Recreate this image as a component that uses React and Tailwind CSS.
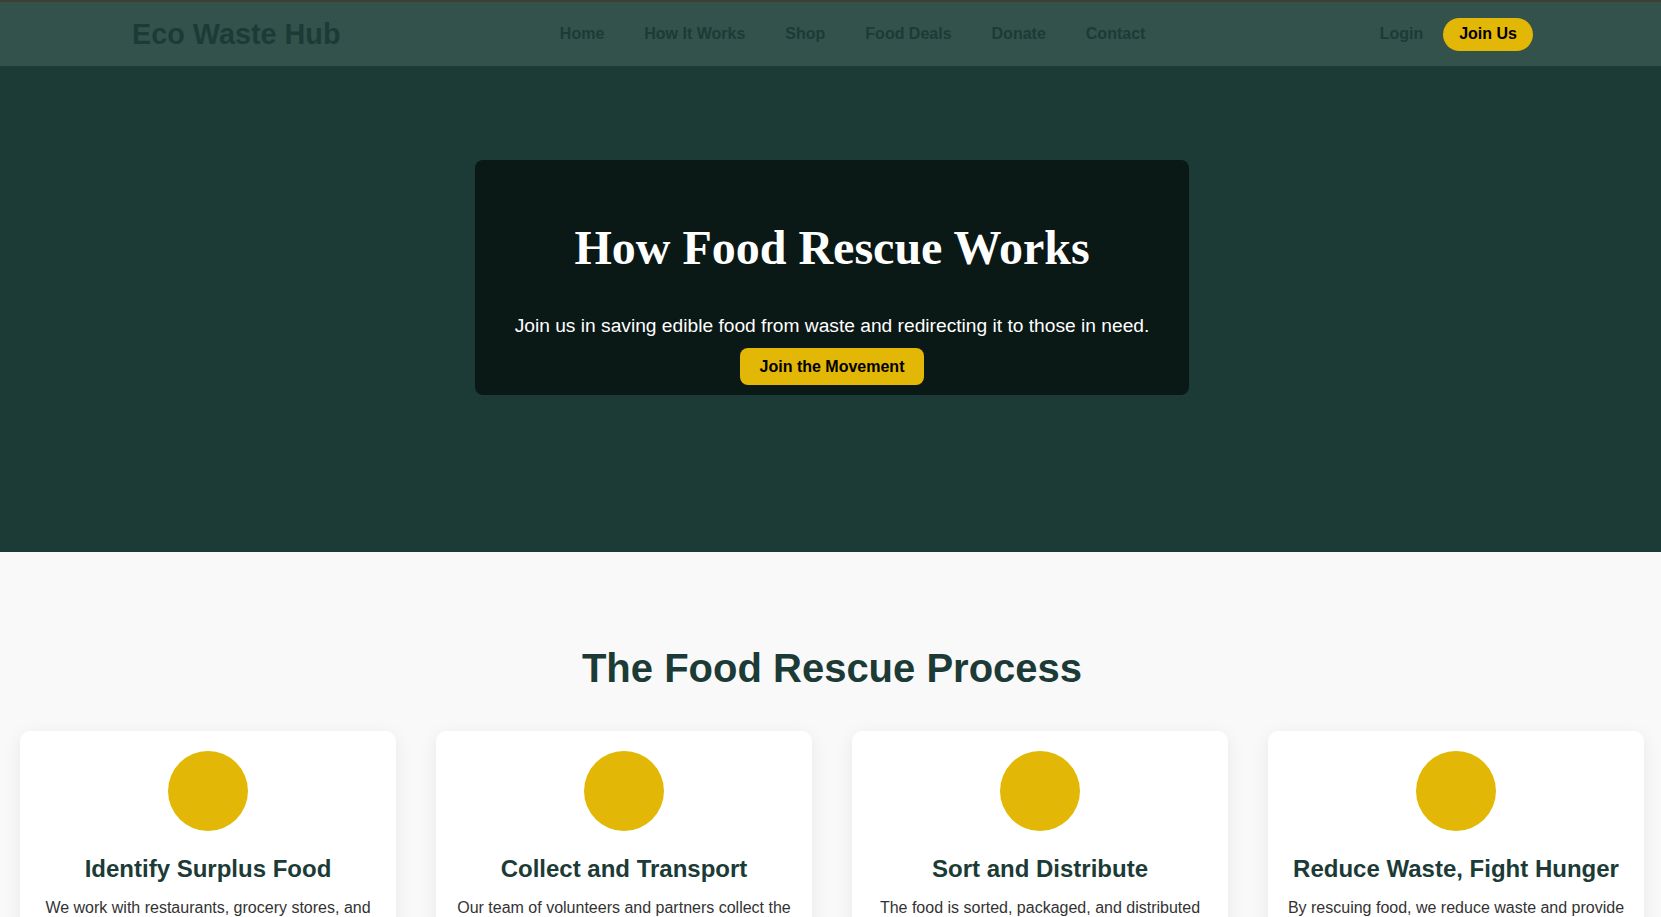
const navLinks = ['Home', 'How It Works', 'Shop', 'Food Deals', 'Donate', 'Contact']

const steps = [
  {
    title: 'Identify Surplus Food',
    text: 'We work with restaurants, grocery stores, and farms to identify surplus food that would otherwise go to waste.',
  },
  {
    title: 'Collect and Transport',
    text: 'Our team of volunteers and partners collect the surplus food and transport it safely to our distribution centers.',
  },
  {
    title: 'Sort and Distribute',
    text: 'The food is sorted, packaged, and distributed efficiently to local shelters, food banks, and communities in need.',
  },
  {
    title: 'Reduce Waste, Fight Hunger',
    text: 'By rescuing food, we reduce waste and provide nutritious meals to families facing food insecurity.',
  },
]

export default function App() {
  return (
    <div className="min-h-screen bg-[#f9f9f9] font-['Liberation_Sans',Arial,sans-serif]">
      {/* Navbar */}
      <header className="h-[66px] border-t-2 border-[#3a4132] bg-[#33524c]">
        <div className="ml-[132px] flex h-full w-[1401px] items-center justify-between">
          <a className="text-[28.8px] font-bold leading-[32px] text-[#1c3b36]">Eco Waste Hub</a>
          <nav className="flex items-center gap-10 pr-[15px]">
            {navLinks.map((l) => (
              <a key={l} className="text-base font-bold leading-[18px] text-[#1c3b36]">
                {l}
              </a>
            ))}
          </nav>
          <div className="flex items-center gap-5">
            <a className="text-base font-bold leading-[18px] text-[#1c3b36]">Login</a>
            <button className="flex h-[33px] items-center rounded-full bg-[#e2b705] px-4 text-base font-bold text-black">
              Join Us
            </button>
          </div>
        </div>
      </header>

      {/* Hero */}
      <section className="flex h-[486px] justify-center bg-[#1c3b36] pt-[94px]">
        <div className="ml-[3px] flex h-[235px] w-[714px] flex-col items-center rounded-lg bg-[#0a1816] px-8 pt-[60px] text-center">
          <h1 className="font-['Liberation_Serif','Times_New_Roman',serif] text-[48px] font-bold leading-[56px] text-white">
            How Food Rescue Works
          </h1>
          <p className="mt-[36px] whitespace-nowrap text-[19.2px] leading-[27px] text-white">
            Join us in saving edible food from waste and redirecting it to those in need.
          </p>
          <button className="mt-[9px] flex h-[37px] items-center rounded-lg bg-[#e2b705] px-5 text-base font-bold text-black">
            Join the Movement
          </button>
        </div>
      </section>

      {/* Process */}
      <section className="pt-[93px] pb-16">
        <h2 className="ml-[3px] text-center text-[40px] font-bold leading-[46px] text-[#1c3b36]">
          The Food Rescue Process
        </h2>
        <div className="mt-[40px] grid grid-cols-4 gap-10 pl-5 pr-[17px]">
          {steps.map((s) => (
            <div
              key={s.title}
              className="flex flex-col items-center rounded-[10px] bg-white p-5 text-center shadow-[0_4px_20px_rgba(0,0,0,0.07)]"
            >
              <div className="h-20 w-20 rounded-full bg-[#e2b705]" />
              <h3 className="mt-[24px] text-2xl font-bold leading-[28px] text-[#1c3b36]">{s.title}</h3>
              <p className="-mx-[1px] mt-[13px] text-base leading-6 text-[#333]">{s.text}</p>
            </div>
          ))}
        </div>
      </section>
    </div>
  )
}
